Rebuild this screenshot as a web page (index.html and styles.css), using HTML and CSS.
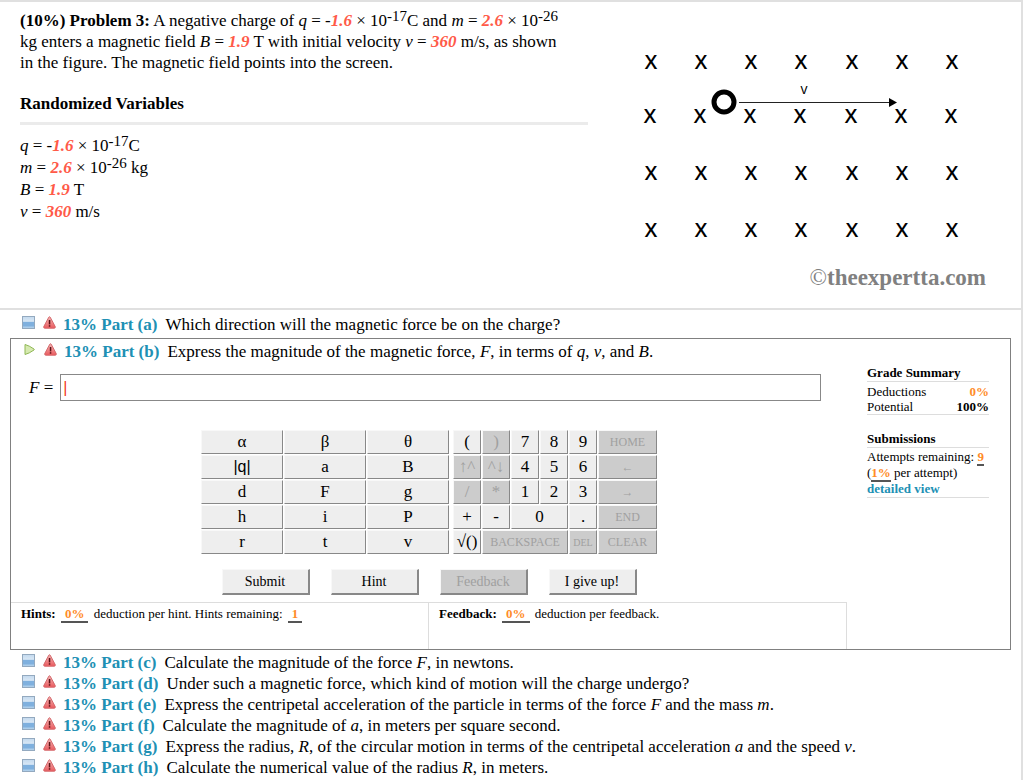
FILE: index.html
```
<!DOCTYPE html>
<html lang="en">
<head>
  <meta charset="UTF-8">
  <meta name="viewport" content="width=device-width, initial-scale=1.0">
  <title>Problem 3</title>
  <link rel="stylesheet" href="styles.css">
</head>
<body>
  <svg class="icon-defs" aria-hidden="true">
    <defs>
      <linearGradient id="blue" x1="0" y1="0" x2="0" y2="1">
        <stop offset="0" stop-color="#c3d9ee"/>
        <stop offset="0.4" stop-color="#d8e7f5"/>
        <stop offset="0.5" stop-color="#7fb0de"/>
        <stop offset="0.75" stop-color="#7fb0de"/>
        <stop offset="1" stop-color="#c3dcf0"/>
      </linearGradient>
      <linearGradient id="red" x1="0" y1="0" x2="0" y2="1">
        <stop offset="0" stop-color="#f3b8b8"/>
        <stop offset="1" stop-color="#ea5a5e"/>
      </linearGradient>
      <symbol id="square" viewBox="0 0 13 13">
        <rect x="0.5" y="0.5" width="12" height="12" fill="url(#blue)" stroke="#93a9bf"/>
      </symbol>
      <symbol id="warn" viewBox="0 0 13 13">
        <path d="M5.8 1.2 Q6.5 0.2 7.2 1.2 L12.2 10.6 Q12.6 12.2 11.3 12.2 H1.7 Q0.4 12.2 0.8 10.6 Z" fill="url(#red)" stroke="#d4686b"/>
        <rect x="5.8" y="4" width="1.5" height="4.4" fill="#5b1216"/>
        <rect x="5.8" y="9.2" width="1.5" height="1.5" fill="#5b1216"/>
      </symbol>
      <symbol id="play" viewBox="0 0 13 13">
        <path d="M2 1.5 Q6 2.5 11 6 Q11.6 6.5 11 7 Q6 10.5 2 11.5 Z" fill="#d6eab0" stroke="#8fb755"/>
      </symbol>
    </defs>
  </svg>

  <main class="page">
    <section class="problem">
      <div class="statement">
        <p><b>(10%) Problem 3:</b> A negative charge of <i>q</i> = -<em>1.6</em> × 10<sup>-17</sup>C and <i>m</i> = <em>2.6</em> × 10<sup>-26</sup> kg enters a magnetic field <i>B</i> = <em>1.9</em> T with initial velocity <i>v</i> = <em>360</em> m/s, as shown in the figure. The magnetic field points into the screen.</p>
        <h2>Randomized Variables</h2>
        <ul class="variables">
          <li><i>q</i> = -<em>1.6</em> × 10<sup>-17</sup>C</li>
          <li><i>m</i> = <em>2.6</em> × 10<sup>-26</sup> kg</li>
          <li><i>B</i> = <em>1.9</em> T</li>
          <li><i>v</i> = <em>360</em> m/s</li>
        </ul>
      </div>
      <svg class="figure" viewBox="0 0 384 306" role="img" aria-label="Charge moving right in a magnetic field">
        <g class="field">
          <text y="67"><tspan x="14">X</tspan><tspan x="64">X</tspan><tspan x="114">X</tspan><tspan x="164">X</tspan><tspan x="215">X</tspan><tspan x="265">X</tspan><tspan x="315">X</tspan></text>
          <text y="121"><tspan x="13">X</tspan><tspan x="63">X</tspan><tspan x="113">X</tspan><tspan x="163">X</tspan><tspan x="214">X</tspan><tspan x="264">X</tspan><tspan x="314">X</tspan></text>
          <text y="178"><tspan x="14">X</tspan><tspan x="64">X</tspan><tspan x="114">X</tspan><tspan x="164">X</tspan><tspan x="215">X</tspan><tspan x="265">X</tspan><tspan x="315">X</tspan></text>
          <text y="235"><tspan x="14">X</tspan><tspan x="64">X</tspan><tspan x="114">X</tspan><tspan x="164">X</tspan><tspan x="215">X</tspan><tspan x="265">X</tspan><tspan x="315">X</tspan></text>
        </g>
        <text class="velocity" x="167" y="92">v</text>
        <circle cx="87" cy="100" r="10" fill="#fff" stroke="#000" stroke-width="5"/>
        <path d="M102 100.5 H254" stroke="#222"/>
        <path d="M252 96 L260 100.5 L252 105 Z"/>
        <text class="credit" x="349" y="283"><tspan class="mark">©</tspan>theexpertta.com</text>
      </svg>
    </section>

    <div class="part">
      <svg class="icon"><use href="#square"/></svg><svg class="icon"><use href="#warn"/></svg>
      <a href="#a">13% Part (a)</a><span>Which direction will the magnetic force be on the charge?</span>
    </div>

    <section class="active-part">
      <div class="work">
        <div class="part">
          <svg class="icon"><use href="#play"/></svg><svg class="icon"><use href="#warn"/></svg>
          <a href="#b">13% Part (b)</a><span>Express the magnitude of the magnetic force, <i>F</i>, in terms of <i>q</i>, <i>v</i>, and <i>B</i>.</span>
        </div>
        <div class="answer">
          <label for="answer"><i>F</i> =</label>
          <input type="text" id="answer" value="|">
        </div>
        <div class="keypad">
          <div class="letters">
            <button>α</button><button>β</button><button>θ</button>
            <button class="sans">|q|</button><button>a</button><button>B</button>
            <button>d</button><button>F</button><button>g</button>
            <button>h</button><button>i</button><button>P</button>
            <button>r</button><button>t</button><button>v</button>
          </div>
          <div class="numbers">
            <button>(</button><button disabled>)</button><button>7</button><button>8</button><button>9</button><button class="word" disabled>HOME</button>
            <button disabled>↑^</button><button disabled>^↓</button><button>4</button><button>5</button><button>6</button><button class="word" disabled>←</button>
            <button disabled>/</button><button disabled>*</button><button>1</button><button>2</button><button>3</button><button class="word" disabled>→</button>
            <button>+</button><button>-</button><button class="double">0</button><button>.</button><button class="word" disabled>END</button>
            <button>√()</button><button class="word triple" disabled>BACKSPACE</button><button class="small" disabled>DEL</button><button class="word" disabled>CLEAR</button>
          </div>
        </div>
        <div class="actions">
          <button>Submit</button>
          <button>Hint</button>
          <button disabled>Feedback</button>
          <button>I give up!</button>
        </div>
        <div class="notes">
          <div><b>Hints:</b> <strong class="wide">0%</strong> deduction per hint. Hints remaining: <strong class="wide">1</strong></div>
          <div><b>Feedback:</b> <strong class="wide">0%</strong> deduction per feedback.</div>
        </div>
      </div>
      <aside class="summary">
        <h3>Grade Summary</h3>
        <table>
          <tr><th>Deductions</th><td class="orange">0%</td></tr>
          <tr><th>Potential</th><td>100%</td></tr>
        </table>
        <h3>Submissions</h3>
        <p>Attempts remaining: <strong>9</strong><br>(<strong>1%</strong> per attempt)<br><a href="#detail">detailed view</a></p>
      </aside>
    </section>

    <section class="more-parts">
      <div class="part">
        <svg class="icon"><use href="#square"/></svg><svg class="icon"><use href="#warn"/></svg>
        <a href="#c">13% Part (c)</a><span>Calculate the magnitude of the force <i>F</i>, in newtons.</span>
      </div>
      <div class="part">
        <svg class="icon"><use href="#square"/></svg><svg class="icon"><use href="#warn"/></svg>
        <a href="#d">13% Part (d)</a><span>Under such a magnetic force, which kind of motion will the charge undergo?</span>
      </div>
      <div class="part">
        <svg class="icon"><use href="#square"/></svg><svg class="icon"><use href="#warn"/></svg>
        <a href="#e">13% Part (e)</a><span>Express the centripetal acceleration of the particle in terms of the force <i>F</i> and the mass <i>m</i>.</span>
      </div>
      <div class="part">
        <svg class="icon"><use href="#square"/></svg><svg class="icon"><use href="#warn"/></svg>
        <a href="#f">13% Part (f)</a><span>Calculate the magnitude of <i>a</i>, in meters per square second.</span>
      </div>
      <div class="part">
        <svg class="icon"><use href="#square"/></svg><svg class="icon"><use href="#warn"/></svg>
        <a href="#g">13% Part (g)</a><span>Express the radius, <i>R</i>, of the circular motion in terms of the centripetal acceleration <i>a</i> and the speed <i>v</i>.</span>
      </div>
      <div class="part">
        <svg class="icon"><use href="#square"/></svg><svg class="icon"><use href="#warn"/></svg>
        <a href="#h">13% Part (h)</a><span>Calculate the numerical value of the radius <i>R</i>, in meters.</span>
      </div>
    </section>
  </main>
</body>
</html>
```
FILE: styles.css
```
* {
  box-sizing: border-box;
}
body {
  margin: 0;
  background-color: #fff;
  color: #000;
  font-family: "Liberation Serif", "Times New Roman", serif;
  font-size: 17px;
  line-height: 21px;
}
p, h2, h3, ul {
  margin: 0;
  padding: 0;
}
a {
  color: #2090b4;
  font-weight: bold;
  text-decoration: none;
}
.icon-defs {
  position: absolute;
  width: 0;
  height: 0;
}
.page {
  min-height: 100vh;
  margin-right: 1px;
  border-top: 2px solid #e0e0e0;
  border-right: 2px solid #e0e0e0;
}

/* problem statement */
.problem {
  display: flex;
  justify-content: space-between;
  border-bottom: 2px solid #e0e0e0;
}
.statement {
  flex: 1;
  max-width: 588px;
  padding: 8px 0 0 20px;
}
.statement p {
  max-width: 550px;
}
.statement h2 {
  margin-top: 20px;
  padding-bottom: 8px;
  border-bottom: 3px solid #ebebeb;
  font-size: 17px;
}
.statement em {
  color: #ff5a48;
  font-weight: bold;
}
.statement sup {
  font-size: 15px;
  line-height: 0;
  vertical-align: 5px;
}
.variables {
  margin-top: 10px;
  list-style: none;
  line-height: 22px;
}
.figure {
  flex: none;
  width: 384px;
  height: 306px;
}
.field {
  font: 600 20px "Open Sans", sans-serif;
  text-anchor: middle;
}
.velocity {
  font: 14px "Open Sans", sans-serif;
  text-anchor: middle;
}
.credit {
  fill: #808080;
  font-size: 23px;
  font-weight: bold;
  text-anchor: end;
}
.credit .mark {
  font-weight: normal;
}

/* part rows */
.part {
  display: flex;
  align-items: center;
  padding-left: 22px;
}
.part span {
  margin-left: 8px;
}
.icon {
  width: 13px;
  height: 13px;
  margin: 0 7px 4px 0;
}
.icon:first-child {
  margin-right: 8px;
}
.page > .part {
  padding-top: 4px;
  padding-bottom: 3px;
}
.more-parts {
  padding-top: 2px;
}

/* open part */
.active-part {
  display: flex;
  margin: 0 10px;
  border: 1px solid #808080;
}
.work {
  flex: 1;
}
.work .part {
  padding: 2px 0 0 12px;
}
.answer {
  display: flex;
  align-items: center;
  gap: 7px;
  padding: 12px 26px 0 18px;
}
.answer input {
  flex: 1;
  height: 27px;
  padding: 0 2px;
  border: 1px solid #888;
  color: #f33a20;
  font: 16px "Liberation Sans", sans-serif;
}
button {
  padding: 0;
  border: 1px solid #f8f8f8;
  border-right-color: #888;
  border-bottom-color: #888;
  background-color: #eee;
  color: #000;
  font: 17px "Liberation Serif", serif;
}
button:disabled {
  background-color: #ccc;
  color: #a0a0a0;
}
.keypad {
  display: flex;
  justify-content: center;
  gap: 4px;
  margin-top: 29px;
}
.letters, .numbers {
  display: grid;
  grid-auto-rows: 24px;
  gap: 1px;
}
.letters {
  grid-template-columns: repeat(3, 82px);
}
.numbers {
  grid-template-columns: repeat(5, 28px) 59px;
}
.letters .sans {
  font: 16px "Liberation Sans", sans-serif;
}
.numbers .double {
  grid-column: span 2;
}
.numbers .triple {
  grid-column: span 3;
}
.numbers .word {
  font-size: 12px;
}
.numbers .small {
  font-size: 10px;
}
.actions {
  display: flex;
  justify-content: center;
  gap: 21px;
  margin-top: 15px;
}
.actions button {
  width: 88px;
  height: 26px;
  border-width: 1px 2px 2px 1px;
  font-size: 14px;
}
.notes {
  display: grid;
  grid-template-columns: 1fr 1fr;
  margin-top: 7px;
  font-size: 13px;
}
.notes div {
  height: 47px;
  padding: 0 10px;
  border-top: 1px solid #ddd;
  border-right: 1px solid #ddd;
}
strong {
  border-bottom: 2px solid #555;
  color: #ff8c28;
}
.wide {
  padding: 0 4px;
  margin: 0 2px;
}

/* grades */
.summary {
  flex: none;
  width: 163px;
  padding: 26px 21px 0 20px;
  font-size: 13px;
  line-height: 16px;
}
.summary h3, .summary table, .summary p {
  border-bottom: 1px solid #ddd;
}
.summary h3 {
  font-size: 13px;
}
.summary table {
  width: 100%;
  margin-bottom: 16px;
  padding-top: 2px;
  border-spacing: 0;
  line-height: 15px;
}
.summary p {
  padding-top: 1px;
}
.summary th, .summary td {
  padding: 0;
  text-align: left;
  font-weight: normal;
}
.summary td {
  text-align: right;
  font-weight: bold;
}
.summary .orange {
  color: #ff8c28;
}
```
